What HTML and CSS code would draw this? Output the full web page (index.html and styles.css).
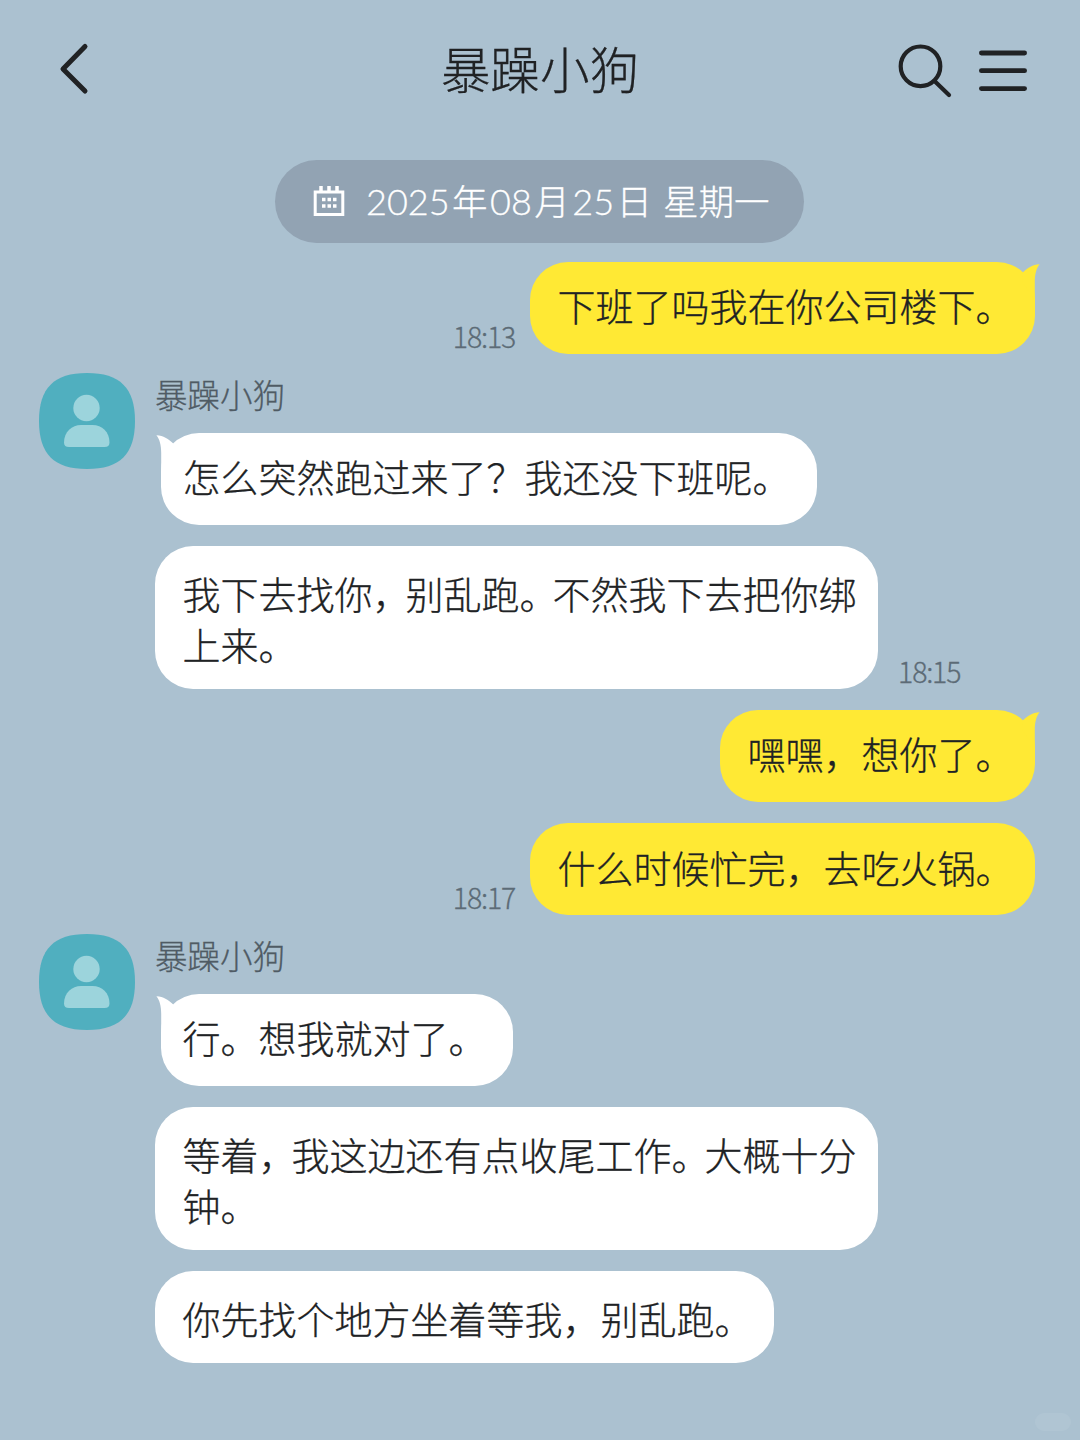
FILE: index.html
```html
<!DOCTYPE html>
<html lang="zh-CN">
<head>
    <meta charset="UTF-8">
    <title>暴躁小狗</title>
    <link rel="stylesheet" href="styles.css">
</head>
<body>

<svg class="symbols" aria-hidden="true">
    <symbol id="avatar" viewBox="0 0 96 96">
        <path fill="#50afbf" d="M48 0C81 0 96 15 96 48S81 96 48 96 0 81 0 48 15 0 48 0Z"/>
        <circle cx="47.5" cy="35" r="13.2" fill="#9cd4dc"/>
        <path fill="#9cd4dc" d="M25 69.500C25 59 33 52 42 52H53.500C63 52 70.500 59 70.500 69.500Q70.500 74 65.500 74H30Q25 74 25 69.500Z"/>
    </symbol>
    <symbol id="tail" viewBox="0 0 20 40">
        <path d="M3 10.200C8.500 5.500 12 2.800 19.600 2.300C16.500 6 14.800 12 14.800 20V38L2 20Z"/>
    </symbol>
</svg>

<header class="header">
    <svg class="icon-back" viewBox="0 0 34 54"><path d="M27 4.500L5 27L27 49"/></svg>
    <h1 class="title">暴躁小狗</h1>
    <div class="header-actions">
        <svg class="icon-search" viewBox="0 0 56 56"><circle cx="23.5" cy="24.300" r="19.800"/><path d="M37.500 39L52 53"/></svg>
        <svg class="icon-menu" viewBox="0 0 50 44"><path d="M3.400 4H46.600M3.400 21.700H46.600M3.400 39.600H46.600"/></svg>
    </div>
</header>

<main class="chat">
    <div class="date">
        <svg class="icon-calendar" viewBox="0 0 32 31">
            <path class="frame" d="M2.200 6H29.800V28.600H2.200Z"/>
            <path class="rings" d="M8 0V6M16 0V6M24 0V6"/>
            <path class="days" d="M9 13.500h3.500M14.500 13.500h3.500M20 13.500h3.500M9 20h3.500M14.500 20h3.500M20 20h3.500"/>
        </svg>
        <span class="date-text">2025<i>年</i>08<i>月</i>25<i>日</i><span class="weekday">星期一</span></span>
    </div>

    <div class="row mine first">
        <time>18:13</time>
        <p class="bubble tailed">下班了吗我在你公司楼下。<svg class="tail"><use href="#tail"/></svg></p>
    </div>

    <section class="group">
        <svg class="avatar"><use href="#avatar"/></svg>
        <div class="messages">
            <div class="name">暴躁小狗</div>
            <p class="bubble tailed">怎么突然跑过来了？我还没下班呢。<svg class="tail"><use href="#tail"/></svg></p>
            <div class="row">
                <p class="bubble">我下去找你<b>，</b>别乱跑<b>。</b>不然我下去把你绑<br>上来。</p>
                <time>18:15</time>
            </div>
        </div>
    </section>

    <div class="row mine">
        <p class="bubble tailed">嘿嘿，想你了。<svg class="tail"><use href="#tail"/></svg></p>
    </div>
    <div class="row mine">
        <time>18:17</time>
        <p class="bubble">什么时候忙完，去吃火锅。</p>
    </div>

    <section class="group">
        <svg class="avatar"><use href="#avatar"/></svg>
        <div class="messages">
            <div class="name">暴躁小狗</div>
            <p class="bubble tailed">行。想我就对了。<svg class="tail"><use href="#tail"/></svg></p>
            <p class="bubble">等着<b>，</b>我这边还有点收尾工作<b>。</b>大概十分<br>钟。</p>
            <p class="bubble">你先找个地方坐着等我，别乱跑。</p>
        </div>
    </section>
</main>

<div class="corner-mark"></div>

</body>
</html>
```

FILE: styles.css
```css
* {
    box-sizing: border-box;
}

body {
    margin: 0;
    height: 1440px;
    overflow: hidden;
    background-color: #abc1d0;
    color: #202224;
    font-family: "Noto Sans CJK SC Light", "Noto Sans CJK SC", sans-serif;
    font-weight: 300;
    -webkit-text-stroke: 0.3px currentColor;
}

.symbols {
    display: block;
    width: 0;
    height: 0;
}

/* 顶部栏 */
.header {
    display: grid;
    grid-template-columns: 1fr auto 1fr;
    align-items: center;
    height: 140px;
    padding: 0 52.5px 0 57.5px;
}

.header svg {
    fill: none;
    stroke: #202224;
    stroke-linecap: round;
    stroke-linejoin: round;
}

.icon-back {
    width: 34px;
    height: 54px;
    margin-top: -2px;
    stroke-width: 5;
}

.title {
    margin: -5px 0 0 -5px;
    font-size: 49.5px;
    font-weight: 300;
    line-height: 60px;
}

.header-actions {
    display: flex;
    justify-content: flex-end;
    align-items: center;
    gap: 25px;
}

.icon-search {
    width: 56px;
    height: 56px;
    stroke-width: 4.2;
}

.icon-menu {
    width: 50px;
    height: 44px;
    margin-top: 2px;
    stroke-width: 4.8;
}

/* 日期 */
.date {
    display: flex;
    align-items: center;
    width: 529px;
    height: 82.5px;
    margin: 20px auto 0 275px;
    padding-left: 38px;
    border-radius: 42px;
    background-color: #92a3b3;
    color: #fff;
    font-family: Lato, "Noto Sans CJK SC Light", "Noto Sans CJK SC", sans-serif;
}

.date-text {
    margin-top: -4px;
    font-size: 36px;
    white-space: nowrap;
}

.date i {
    margin: 0 2.5px;
    font-size: 35.5px;
    font-style: normal;
}

.weekday {
    margin-left: 8.5px;
    font-size: 35.5px;
}

.icon-calendar {
    width: 32px;
    height: 31px;
    margin-right: 21px;
    fill: none;
    stroke: #fff;
}

.frame {
    stroke-width: 3;
}

.rings,
.days {
    stroke-width: 3.5;
}

/* 消息 */
.chat {
    display: flex;
    flex-direction: column;
    gap: 20.5px;
}

.row {
    display: flex;
    align-items: flex-end;
    gap: 20px;
}

.row.mine {
    justify-content: flex-end;
    gap: 15px;
    padding-right: 45.5px;
}

.row.first {
    margin-top: -1.5px;
}

.bubble {
    position: relative;
    width: fit-content;
    margin: 0;
    padding: 21px 21.5px 20.5px 27.5px;
    border-radius: 38px;
    background-color: #fff;
    font-size: 38px;
    line-height: 51px;
    white-space: nowrap;
}

.bubble.tailed {
    padding-top: 17px;
    padding-bottom: 24.5px;
}

/* 折行时标点收窄 */
.bubble b {
    font-weight: inherit;
    letter-spacing: -5px;
}

.mine .bubble {
    padding-right: 21px;
    background-color: #ffe934;
}

.mine .bubble:not(.tailed) {
    padding-top: 18.5px;
    padding-bottom: 23px;
}

.tail {
    position: absolute;
    top: 0;
    left: -5px;
    width: 20px;
    height: 40px;
    fill: #fff;
    transform: scaleX(-1);
}

.mine .tail {
    right: -5px;
    left: auto;
    fill: #ffe934;
    transform: none;
}

time {
    color: #5c6b76;
    font-family: "Noto Sans CJK SC", sans-serif;
    font-size: 28.5px;
    line-height: 37px;
    letter-spacing: -1.2px;
}

.group {
    display: flex;
    gap: 20px;
    margin-top: -2px;
    padding-left: 39px;
}

.avatar {
    width: 96px;
    height: 96px;
}

.messages {
    display: flex;
    flex-direction: column;
    gap: 20.5px;
}

.name {
    height: 39.5px;
    color: #4f5b64;
    font-size: 32.5px;
    line-height: 42px;
}

.messages .tailed {
    margin-left: 5.5px;
    padding-right: 26px;
    padding-left: 22px;
}

.corner-mark {
    position: absolute;
    right: 9px;
    bottom: 9px;
    width: 36px;
    height: 18px;
    border-radius: 9px;
    background-color: #b0c5d3;
}
```
